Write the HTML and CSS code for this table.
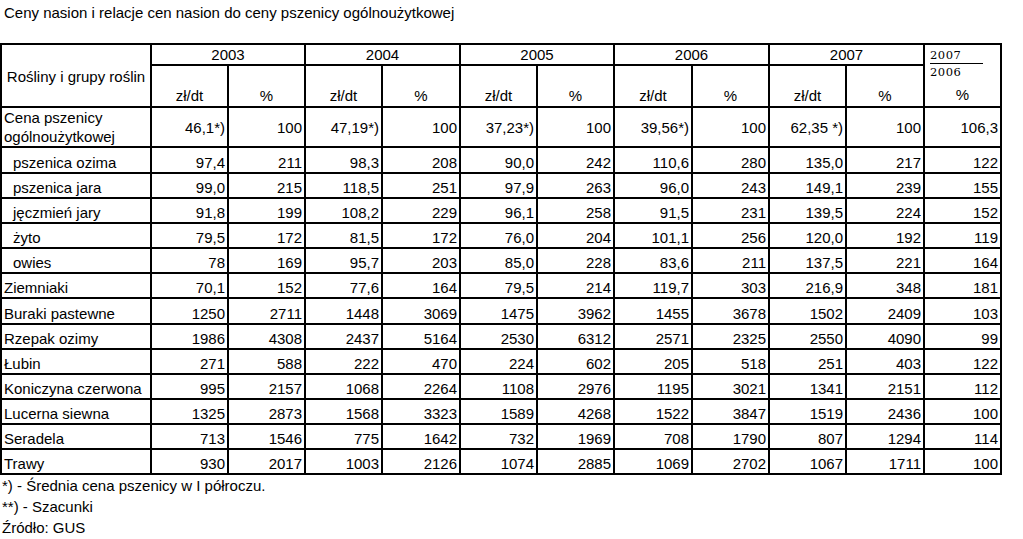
FILE: index.html
```html
<!DOCTYPE html>
<html lang="pl">
<head>
<meta charset="utf-8">
<title>Ceny nasion</title>
<link rel="stylesheet" href="styles.css">
</head>
<body>
<div class="page">
  <h1 class="title">Ceny nasion i relacje cen nasion do ceny pszenicy ogólnoużytkowej</h1>
  <table class="grid">
    <colgroup>
      <col class="c-label">
      <col class="c-d"><col class="c-d"><col class="c-d"><col class="c-w">
      <col class="c-d"><col class="c-d"><col class="c-w"><col class="c-d">
      <col class="c-d"><col class="c-w"><col class="c-d">
    </colgroup>
    <thead>
      <tr class="h-year">
        <th class="h-label" rowspan="2">Rośliny i grupy roślin</th>
        <th colspan="2">2003</th>
        <th colspan="2">2004</th>
        <th colspan="2">2005</th>
        <th colspan="2">2006</th>
        <th colspan="2">2007</th>
        <th class="h-ratio" rowspan="2">
          <div class="frac">
            <span class="num">2007</span>
            <span class="den">2006</span>
          </div>
          <div class="pct">%</div>
        </th>
      </tr>
      <tr class="h-unit">
        <th>zł/dt</th><th>%</th>
        <th>zł/dt</th><th>%</th>
        <th>zł/dt</th><th>%</th>
        <th>zł/dt</th><th>%</th>
        <th>zł/dt</th><th>%</th>
      </tr>
    </thead>
    <tbody>
      <tr class="r-tall">
        <td class="lbl lbl-wrap">Cena pszenicy<br>ogólnoużytkowej</td>
        <td>46,1*)</td><td>100</td><td>47,19*)</td><td>100</td><td>37,23*)</td><td>100</td><td>39,56*)</td><td>100</td><td>62,35 *)</td><td>100</td><td>106,3</td>
      </tr>
      <tr class="r-big"><td class="lbl sub">pszenica ozima</td><td>97,4</td><td>211</td><td>98,3</td><td>208</td><td>90,0</td><td>242</td><td>110,6</td><td>280</td><td>135,0</td><td>217</td><td>122</td></tr>
      <tr><td class="lbl sub">pszenica jara</td><td>99,0</td><td>215</td><td>118,5</td><td>251</td><td>97,9</td><td>263</td><td>96,0</td><td>243</td><td>149,1</td><td>239</td><td>155</td></tr>
      <tr><td class="lbl sub">jęczmień jary</td><td>91,8</td><td>199</td><td>108,2</td><td>229</td><td>96,1</td><td>258</td><td>91,5</td><td>231</td><td>139,5</td><td>224</td><td>152</td></tr>
      <tr><td class="lbl sub">żyto</td><td>79,5</td><td>172</td><td>81,5</td><td>172</td><td>76,0</td><td>204</td><td>101,1</td><td>256</td><td>120,0</td><td>192</td><td>119</td></tr>
      <tr><td class="lbl sub">owies</td><td>78</td><td>169</td><td>95,7</td><td>203</td><td>85,0</td><td>228</td><td>83,6</td><td>211</td><td>137,5</td><td>221</td><td>164</td></tr>
      <tr><td class="lbl">Ziemniaki</td><td>70,1</td><td>152</td><td>77,6</td><td>164</td><td>79,5</td><td>214</td><td>119,7</td><td>303</td><td>216,9</td><td>348</td><td>181</td></tr>
      <tr class="r-big"><td class="lbl">Buraki pastewne</td><td>1250</td><td>2711</td><td>1448</td><td>3069</td><td>1475</td><td>3962</td><td>1455</td><td>3678</td><td>1502</td><td>2409</td><td>103</td></tr>
      <tr><td class="lbl">Rzepak ozimy</td><td>1986</td><td>4308</td><td>2437</td><td>5164</td><td>2530</td><td>6312</td><td>2571</td><td>2325</td><td>2550</td><td>4090</td><td>99</td></tr>
      <tr><td class="lbl">Łubin</td><td>271</td><td>588</td><td>222</td><td>470</td><td>224</td><td>602</td><td>205</td><td>518</td><td>251</td><td>403</td><td>122</td></tr>
      <tr><td class="lbl">Koniczyna czerwona</td><td>995</td><td>2157</td><td>1068</td><td>2264</td><td>1108</td><td>2976</td><td>1195</td><td>3021</td><td>1341</td><td>2151</td><td>112</td></tr>
      <tr><td class="lbl">Lucerna siewna</td><td>1325</td><td>2873</td><td>1568</td><td>3323</td><td>1589</td><td>4268</td><td>1522</td><td>3847</td><td>1519</td><td>2436</td><td>100</td></tr>
      <tr><td class="lbl">Seradela</td><td>713</td><td>1546</td><td>775</td><td>1642</td><td>732</td><td>1969</td><td>708</td><td>1790</td><td>807</td><td>1294</td><td>114</td></tr>
      <tr><td class="lbl">Trawy</td><td>930</td><td>2017</td><td>1003</td><td>2126</td><td>1074</td><td>2885</td><td>1069</td><td>2702</td><td>1067</td><td>1711</td><td>100</td></tr>
    </tbody>
  </table>
  <div class="notes">
    <p>*) - Średnia cena pszenicy w I półroczu.</p>
    <p>**) - Szacunki</p>
    <p>Źródło: GUS</p>
  </div>
</div>
</body>
</html>
```

FILE: styles.css
```css
html, body {
  margin: 0;
  padding: 0;
  background: #fff;
}
body {
  font-family: "Liberation Sans", Arial, sans-serif;
  font-size: 15px;
  color: #000;
}
.page {
  padding: 0;
}
.title {
  margin: 0;
  padding: 4px 0 0 4px;
  height: 43px;
  box-sizing: border-box;
  font-size: 15px;
  font-weight: normal;
  line-height: 17px;
}
.grid {
  border-collapse: collapse;
  table-layout: fixed;
  width: 1000px;
  border: 2px solid #000;
}
.c-label { width: 150px; }
.c-d { width: 77px; }
.c-w { width: 78px; }
.grid th, .grid td {
  border: 2px solid #000;
  padding: 0 2px 1px 2px;
  line-height: 17px;
  vertical-align: bottom;
  white-space: nowrap;
  overflow: hidden;
}
.grid th {
  font-weight: normal;
  text-align: center;
}
.h-year th { height: 18px; padding-bottom: 1px; }
.h-unit th { height: 38px; padding-bottom: 2px; }
.grid th.h-label {
  vertical-align: middle;
  padding: 2px 0 0 0;
}
.grid th.h-ratio {
  vertical-align: top;
  padding: 4px 0 0 5px;
  text-align: left;
}
.frac {
  display: flex;
  flex-direction: column;
  align-items: flex-start;
  font-family: "DejaVu Serif", "Liberation Serif", serif;
  font-size: 11.5px;
  letter-spacing: 0.5px;
  line-height: 12px;
}
.num {
  width: 53px;
  border-bottom: 1px solid #000;
  padding-bottom: 2px;
  margin-bottom: 2px;
}
.pct {
  text-align: center;
  padding-right: 5px;
  margin-top: 9px;
  line-height: 16px;
}
.grid td {
  height: 22px;
  text-align: right;
}
.grid tr.r-big td {
  height: 23px;
}
.grid td.lbl {
  text-align: left;
  padding-left: 2px;
}
.grid td.sub {
  padding-left: 11px;
}
.r-tall td {
  height: 38px;
  vertical-align: middle;
  padding-bottom: 0;
}
.r-tall td.lbl-wrap {
  vertical-align: bottom;
  line-height: 19px;
  padding-top: 0;
  padding-bottom: 0;
}
.notes {
  padding: 0 0 0 2px;
}
.notes p {
  margin: 0;
  line-height: 21px;
}
```
